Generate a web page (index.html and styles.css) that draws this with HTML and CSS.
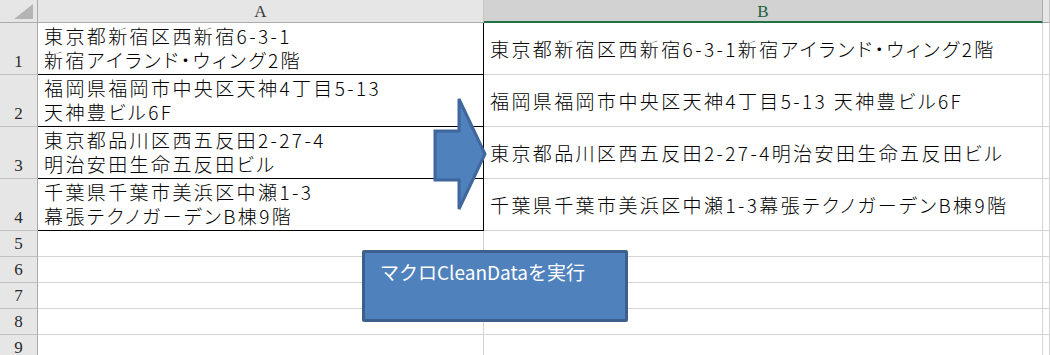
FILE: index.html
```html
<!DOCTYPE html>
<html lang="ja">
<head>
<meta charset="utf-8">
<title>住所データ</title>
<link rel="stylesheet" href="styles.css">
</head>
<body>
<div class="sheet">
  <div class="grid">
    <div class="corner"><span class="corner-tri"></span></div>
    <div class="colhead">A</div>
    <div class="colhead colhead-sel">B</div>
    <div class="colhead colhead-rest"></div>

    <div class="rowhead">1</div>
    <div class="cell cell-a"><span>東京都新宿区西新宿6-3-1</span><span>新宿アイランド・ウィング2階</span></div>
    <div class="cell cell-b">東京都新宿区西新宿6-3-1新宿アイランド・ウィング2階</div>
    <div class="cell"></div>

    <div class="rowhead">2</div>
    <div class="cell cell-a"><span>福岡県福岡市中央区天神4丁目5-13</span><span>天神豊ビル6F</span></div>
    <div class="cell cell-b">福岡県福岡市中央区天神4丁目5-13 天神豊ビル6F</div>
    <div class="cell"></div>

    <div class="rowhead">3</div>
    <div class="cell cell-a"><span>東京都品川区西五反田2-27-4</span><span>明治安田生命五反田ビル</span></div>
    <div class="cell cell-b">東京都品川区西五反田2-27-4明治安田生命五反田ビル</div>
    <div class="cell"></div>

    <div class="rowhead">4</div>
    <div class="cell cell-a"><span>千葉県千葉市美浜区中瀬1-3</span><span>幕張テクノガーデンB棟9階</span></div>
    <div class="cell cell-b">千葉県千葉市美浜区中瀬1-3幕張テクノガーデンB棟9階</div>
    <div class="cell"></div>

    <div class="rowhead small">5</div><div class="cell"></div><div class="cell"></div><div class="cell"></div>
    <div class="rowhead small">6</div><div class="cell"></div><div class="cell"></div><div class="cell"></div>
    <div class="rowhead small">7</div><div class="cell"></div><div class="cell"></div><div class="cell"></div>
    <div class="rowhead small">8</div><div class="cell"></div><div class="cell"></div><div class="cell"></div>
    <div class="rowhead small">9</div><div class="cell"></div><div class="cell"></div><div class="cell"></div>
  </div>

  <!-- block arrow shape floating over the sheet -->
  <svg class="arrow" width="60" height="120" viewBox="0 0 60 120">
    <polygon points="2,34 26,34 26,2 52,57 26,112 26,83 2,83" fill="#4f81bd" stroke="#3f679c" stroke-width="3" stroke-linejoin="miter"/>
  </svg>

  <!-- macro button shape -->
  <div class="macro-btn">マクロCleanDataを実行</div>
</div>
</body>
</html>
```

FILE: styles.css
```css
* {
  box-sizing: border-box;
}

html, body {
  margin: 0;
  padding: 0;
  background: #ffffff;
}

.sheet {
  position: relative;
  width: 1050px;
  height: 355px;
  overflow: hidden;
}

.grid {
  display: grid;
  grid-template-columns: 38px 446px 559px 1fr;
  grid-template-rows: 23px repeat(4, 52px) repeat(5, 26px);
}

.corner {
  position: relative;
  background: #e6e6e6;
  border-right: 1px solid #ababab;
  border-bottom: 1px solid #ababab;
}

.corner-tri {
  position: absolute;
  right: 4px;
  bottom: 3px;
  width: 0;
  height: 0;
  border-left: 19px solid transparent;
  border-bottom: 15px solid #b4b4b4;
}

.colhead {
  background: #e6e6e6;
  border-right: 1px solid #c6c6c6;
  border-bottom: 1px solid #ababab;
  font-family: "Liberation Serif", "DejaVu Serif", serif;
  font-size: 17px;
  color: #3a3a3a;
  display: flex;
  align-items: center;
  justify-content: center;
  padding-top: 2px;
}

.colhead-sel {
  background: #d2d2d2;
  color: #21603a;
  border-right: 1px solid #ababab;
  border-bottom: 2px solid #217346;
}

.colhead-rest {
  background: #e6e6e6;
}

.rowhead {
  background: #e6e6e6;
  border-right: 1px solid #ababab;
  border-bottom: 1px solid #c0c0c0;
  font-family: "Liberation Serif", "DejaVu Serif", serif;
  font-size: 17px;
  color: #2a2a2a;
  display: flex;
  align-items: flex-end;
  justify-content: center;
  padding-bottom: 2px;
}

.rowhead.small {
  align-items: center;
  padding-bottom: 0;
  padding-top: 1px;
}

.cell {
  border-right: 1px solid #d4d4d4;
  border-bottom: 1px solid #d4d4d4;
  font-family: "Noto Sans CJK JP", "Noto Sans", sans-serif;
  font-weight: 300;
  font-size: 19px;
  letter-spacing: 2.4px;
  font-feature-settings: "palt";
  color: #000000;
  white-space: nowrap;
  overflow: hidden;
}

.cell-a {
  border-right: 1px solid #000000;
  border-bottom: 1px solid #000000;
  display: flex;
  flex-direction: column;
  justify-content: flex-end;
  padding: 0 0 2px 6px;
  line-height: 24px;
}

.cell-b {
  display: flex;
  align-items: center;
  padding-left: 6px;
  padding-bottom: 1px;
}

.arrow {
  position: absolute;
  left: 433px;
  top: 97px;
}

.macro-btn {
  position: absolute;
  left: 362px;
  top: 250px;
  width: 266px;
  height: 72px;
  background: #4f81bd;
  border: 3px solid #3d5f8c;
  border-radius: 2px;
  color: #ffffff;
  font-family: "Noto Sans CJK JP", "Noto Sans", sans-serif;
  font-size: 19px;
  line-height: 24px;
  padding: 7px 0 0 15px;
  white-space: nowrap;
}
```
